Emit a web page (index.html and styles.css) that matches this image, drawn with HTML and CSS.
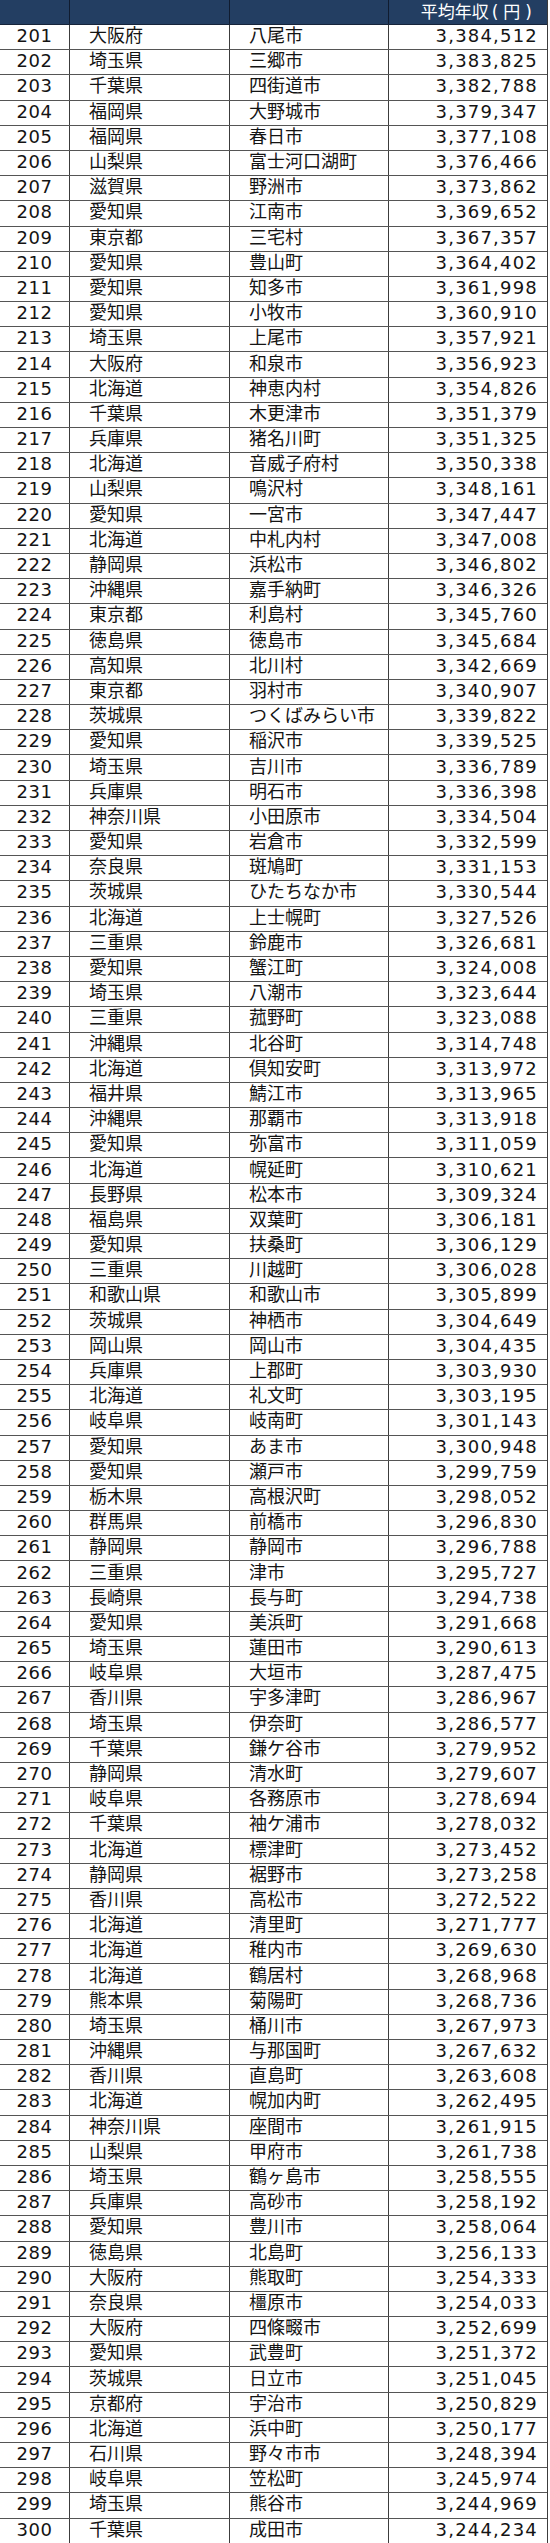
FILE: index.html
```html
<!DOCTYPE html>
<html lang="ja">
<head>
<meta charset="utf-8">
<title>平均年収ランキング 201-300</title>
<link rel="stylesheet" href="styles.css">
</head>
<body>
<div class="table">
<div class="row head"><div class="c rank"></div><div class="c pref"></div><div class="c city"></div><div class="c inc"><span class="htext">平均年収<span class="unit">(円)</span></span></div></div>
<div class="row"><div class="c rank">201</div><div class="c pref">大阪府</div><div class="c city">八尾市</div><div class="c inc">3,384,512</div></div>
<div class="row"><div class="c rank">202</div><div class="c pref">埼玉県</div><div class="c city">三郷市</div><div class="c inc">3,383,825</div></div>
<div class="row"><div class="c rank">203</div><div class="c pref">千葉県</div><div class="c city">四街道市</div><div class="c inc">3,382,788</div></div>
<div class="row"><div class="c rank">204</div><div class="c pref">福岡県</div><div class="c city">大野城市</div><div class="c inc">3,379,347</div></div>
<div class="row"><div class="c rank">205</div><div class="c pref">福岡県</div><div class="c city">春日市</div><div class="c inc">3,377,108</div></div>
<div class="row"><div class="c rank">206</div><div class="c pref">山梨県</div><div class="c city">富士河口湖町</div><div class="c inc">3,376,466</div></div>
<div class="row"><div class="c rank">207</div><div class="c pref">滋賀県</div><div class="c city">野洲市</div><div class="c inc">3,373,862</div></div>
<div class="row"><div class="c rank">208</div><div class="c pref">愛知県</div><div class="c city">江南市</div><div class="c inc">3,369,652</div></div>
<div class="row"><div class="c rank">209</div><div class="c pref">東京都</div><div class="c city">三宅村</div><div class="c inc">3,367,357</div></div>
<div class="row"><div class="c rank">210</div><div class="c pref">愛知県</div><div class="c city">豊山町</div><div class="c inc">3,364,402</div></div>
<div class="row"><div class="c rank">211</div><div class="c pref">愛知県</div><div class="c city">知多市</div><div class="c inc">3,361,998</div></div>
<div class="row"><div class="c rank">212</div><div class="c pref">愛知県</div><div class="c city">小牧市</div><div class="c inc">3,360,910</div></div>
<div class="row"><div class="c rank">213</div><div class="c pref">埼玉県</div><div class="c city">上尾市</div><div class="c inc">3,357,921</div></div>
<div class="row"><div class="c rank">214</div><div class="c pref">大阪府</div><div class="c city">和泉市</div><div class="c inc">3,356,923</div></div>
<div class="row"><div class="c rank">215</div><div class="c pref">北海道</div><div class="c city">神恵内村</div><div class="c inc">3,354,826</div></div>
<div class="row"><div class="c rank">216</div><div class="c pref">千葉県</div><div class="c city">木更津市</div><div class="c inc">3,351,379</div></div>
<div class="row"><div class="c rank">217</div><div class="c pref">兵庫県</div><div class="c city">猪名川町</div><div class="c inc">3,351,325</div></div>
<div class="row"><div class="c rank">218</div><div class="c pref">北海道</div><div class="c city">音威子府村</div><div class="c inc">3,350,338</div></div>
<div class="row"><div class="c rank">219</div><div class="c pref">山梨県</div><div class="c city">鳴沢村</div><div class="c inc">3,348,161</div></div>
<div class="row"><div class="c rank">220</div><div class="c pref">愛知県</div><div class="c city">一宮市</div><div class="c inc">3,347,447</div></div>
<div class="row"><div class="c rank">221</div><div class="c pref">北海道</div><div class="c city">中札内村</div><div class="c inc">3,347,008</div></div>
<div class="row"><div class="c rank">222</div><div class="c pref">静岡県</div><div class="c city">浜松市</div><div class="c inc">3,346,802</div></div>
<div class="row"><div class="c rank">223</div><div class="c pref">沖縄県</div><div class="c city">嘉手納町</div><div class="c inc">3,346,326</div></div>
<div class="row"><div class="c rank">224</div><div class="c pref">東京都</div><div class="c city">利島村</div><div class="c inc">3,345,760</div></div>
<div class="row"><div class="c rank">225</div><div class="c pref">徳島県</div><div class="c city">徳島市</div><div class="c inc">3,345,684</div></div>
<div class="row"><div class="c rank">226</div><div class="c pref">高知県</div><div class="c city">北川村</div><div class="c inc">3,342,669</div></div>
<div class="row"><div class="c rank">227</div><div class="c pref">東京都</div><div class="c city">羽村市</div><div class="c inc">3,340,907</div></div>
<div class="row"><div class="c rank">228</div><div class="c pref">茨城県</div><div class="c city">つくばみらい市</div><div class="c inc">3,339,822</div></div>
<div class="row"><div class="c rank">229</div><div class="c pref">愛知県</div><div class="c city">稲沢市</div><div class="c inc">3,339,525</div></div>
<div class="row"><div class="c rank">230</div><div class="c pref">埼玉県</div><div class="c city">吉川市</div><div class="c inc">3,336,789</div></div>
<div class="row"><div class="c rank">231</div><div class="c pref">兵庫県</div><div class="c city">明石市</div><div class="c inc">3,336,398</div></div>
<div class="row"><div class="c rank">232</div><div class="c pref">神奈川県</div><div class="c city">小田原市</div><div class="c inc">3,334,504</div></div>
<div class="row"><div class="c rank">233</div><div class="c pref">愛知県</div><div class="c city">岩倉市</div><div class="c inc">3,332,599</div></div>
<div class="row"><div class="c rank">234</div><div class="c pref">奈良県</div><div class="c city">斑鳩町</div><div class="c inc">3,331,153</div></div>
<div class="row"><div class="c rank">235</div><div class="c pref">茨城県</div><div class="c city">ひたちなか市</div><div class="c inc">3,330,544</div></div>
<div class="row"><div class="c rank">236</div><div class="c pref">北海道</div><div class="c city">上士幌町</div><div class="c inc">3,327,526</div></div>
<div class="row"><div class="c rank">237</div><div class="c pref">三重県</div><div class="c city">鈴鹿市</div><div class="c inc">3,326,681</div></div>
<div class="row"><div class="c rank">238</div><div class="c pref">愛知県</div><div class="c city">蟹江町</div><div class="c inc">3,324,008</div></div>
<div class="row"><div class="c rank">239</div><div class="c pref">埼玉県</div><div class="c city">八潮市</div><div class="c inc">3,323,644</div></div>
<div class="row"><div class="c rank">240</div><div class="c pref">三重県</div><div class="c city">菰野町</div><div class="c inc">3,323,088</div></div>
<div class="row"><div class="c rank">241</div><div class="c pref">沖縄県</div><div class="c city">北谷町</div><div class="c inc">3,314,748</div></div>
<div class="row"><div class="c rank">242</div><div class="c pref">北海道</div><div class="c city">倶知安町</div><div class="c inc">3,313,972</div></div>
<div class="row"><div class="c rank">243</div><div class="c pref">福井県</div><div class="c city">鯖江市</div><div class="c inc">3,313,965</div></div>
<div class="row"><div class="c rank">244</div><div class="c pref">沖縄県</div><div class="c city">那覇市</div><div class="c inc">3,313,918</div></div>
<div class="row"><div class="c rank">245</div><div class="c pref">愛知県</div><div class="c city">弥富市</div><div class="c inc">3,311,059</div></div>
<div class="row"><div class="c rank">246</div><div class="c pref">北海道</div><div class="c city">幌延町</div><div class="c inc">3,310,621</div></div>
<div class="row"><div class="c rank">247</div><div class="c pref">長野県</div><div class="c city">松本市</div><div class="c inc">3,309,324</div></div>
<div class="row"><div class="c rank">248</div><div class="c pref">福島県</div><div class="c city">双葉町</div><div class="c inc">3,306,181</div></div>
<div class="row"><div class="c rank">249</div><div class="c pref">愛知県</div><div class="c city">扶桑町</div><div class="c inc">3,306,129</div></div>
<div class="row"><div class="c rank">250</div><div class="c pref">三重県</div><div class="c city">川越町</div><div class="c inc">3,306,028</div></div>
<div class="row"><div class="c rank">251</div><div class="c pref">和歌山県</div><div class="c city">和歌山市</div><div class="c inc">3,305,899</div></div>
<div class="row"><div class="c rank">252</div><div class="c pref">茨城県</div><div class="c city">神栖市</div><div class="c inc">3,304,649</div></div>
<div class="row"><div class="c rank">253</div><div class="c pref">岡山県</div><div class="c city">岡山市</div><div class="c inc">3,304,435</div></div>
<div class="row"><div class="c rank">254</div><div class="c pref">兵庫県</div><div class="c city">上郡町</div><div class="c inc">3,303,930</div></div>
<div class="row"><div class="c rank">255</div><div class="c pref">北海道</div><div class="c city">礼文町</div><div class="c inc">3,303,195</div></div>
<div class="row"><div class="c rank">256</div><div class="c pref">岐阜県</div><div class="c city">岐南町</div><div class="c inc">3,301,143</div></div>
<div class="row"><div class="c rank">257</div><div class="c pref">愛知県</div><div class="c city">あま市</div><div class="c inc">3,300,948</div></div>
<div class="row"><div class="c rank">258</div><div class="c pref">愛知県</div><div class="c city">瀬戸市</div><div class="c inc">3,299,759</div></div>
<div class="row"><div class="c rank">259</div><div class="c pref">栃木県</div><div class="c city">高根沢町</div><div class="c inc">3,298,052</div></div>
<div class="row"><div class="c rank">260</div><div class="c pref">群馬県</div><div class="c city">前橋市</div><div class="c inc">3,296,830</div></div>
<div class="row"><div class="c rank">261</div><div class="c pref">静岡県</div><div class="c city">静岡市</div><div class="c inc">3,296,788</div></div>
<div class="row"><div class="c rank">262</div><div class="c pref">三重県</div><div class="c city">津市</div><div class="c inc">3,295,727</div></div>
<div class="row"><div class="c rank">263</div><div class="c pref">長崎県</div><div class="c city">長与町</div><div class="c inc">3,294,738</div></div>
<div class="row"><div class="c rank">264</div><div class="c pref">愛知県</div><div class="c city">美浜町</div><div class="c inc">3,291,668</div></div>
<div class="row"><div class="c rank">265</div><div class="c pref">埼玉県</div><div class="c city">蓮田市</div><div class="c inc">3,290,613</div></div>
<div class="row"><div class="c rank">266</div><div class="c pref">岐阜県</div><div class="c city">大垣市</div><div class="c inc">3,287,475</div></div>
<div class="row"><div class="c rank">267</div><div class="c pref">香川県</div><div class="c city">宇多津町</div><div class="c inc">3,286,967</div></div>
<div class="row"><div class="c rank">268</div><div class="c pref">埼玉県</div><div class="c city">伊奈町</div><div class="c inc">3,286,577</div></div>
<div class="row"><div class="c rank">269</div><div class="c pref">千葉県</div><div class="c city">鎌ケ谷市</div><div class="c inc">3,279,952</div></div>
<div class="row"><div class="c rank">270</div><div class="c pref">静岡県</div><div class="c city">清水町</div><div class="c inc">3,279,607</div></div>
<div class="row"><div class="c rank">271</div><div class="c pref">岐阜県</div><div class="c city">各務原市</div><div class="c inc">3,278,694</div></div>
<div class="row"><div class="c rank">272</div><div class="c pref">千葉県</div><div class="c city">袖ケ浦市</div><div class="c inc">3,278,032</div></div>
<div class="row"><div class="c rank">273</div><div class="c pref">北海道</div><div class="c city">標津町</div><div class="c inc">3,273,452</div></div>
<div class="row"><div class="c rank">274</div><div class="c pref">静岡県</div><div class="c city">裾野市</div><div class="c inc">3,273,258</div></div>
<div class="row"><div class="c rank">275</div><div class="c pref">香川県</div><div class="c city">高松市</div><div class="c inc">3,272,522</div></div>
<div class="row"><div class="c rank">276</div><div class="c pref">北海道</div><div class="c city">清里町</div><div class="c inc">3,271,777</div></div>
<div class="row"><div class="c rank">277</div><div class="c pref">北海道</div><div class="c city">稚内市</div><div class="c inc">3,269,630</div></div>
<div class="row"><div class="c rank">278</div><div class="c pref">北海道</div><div class="c city">鶴居村</div><div class="c inc">3,268,968</div></div>
<div class="row"><div class="c rank">279</div><div class="c pref">熊本県</div><div class="c city">菊陽町</div><div class="c inc">3,268,736</div></div>
<div class="row"><div class="c rank">280</div><div class="c pref">埼玉県</div><div class="c city">桶川市</div><div class="c inc">3,267,973</div></div>
<div class="row"><div class="c rank">281</div><div class="c pref">沖縄県</div><div class="c city">与那国町</div><div class="c inc">3,267,632</div></div>
<div class="row"><div class="c rank">282</div><div class="c pref">香川県</div><div class="c city">直島町</div><div class="c inc">3,263,608</div></div>
<div class="row"><div class="c rank">283</div><div class="c pref">北海道</div><div class="c city">幌加内町</div><div class="c inc">3,262,495</div></div>
<div class="row"><div class="c rank">284</div><div class="c pref">神奈川県</div><div class="c city">座間市</div><div class="c inc">3,261,915</div></div>
<div class="row"><div class="c rank">285</div><div class="c pref">山梨県</div><div class="c city">甲府市</div><div class="c inc">3,261,738</div></div>
<div class="row"><div class="c rank">286</div><div class="c pref">埼玉県</div><div class="c city">鶴ヶ島市</div><div class="c inc">3,258,555</div></div>
<div class="row"><div class="c rank">287</div><div class="c pref">兵庫県</div><div class="c city">高砂市</div><div class="c inc">3,258,192</div></div>
<div class="row"><div class="c rank">288</div><div class="c pref">愛知県</div><div class="c city">豊川市</div><div class="c inc">3,258,064</div></div>
<div class="row"><div class="c rank">289</div><div class="c pref">徳島県</div><div class="c city">北島町</div><div class="c inc">3,256,133</div></div>
<div class="row"><div class="c rank">290</div><div class="c pref">大阪府</div><div class="c city">熊取町</div><div class="c inc">3,254,333</div></div>
<div class="row"><div class="c rank">291</div><div class="c pref">奈良県</div><div class="c city">橿原市</div><div class="c inc">3,254,033</div></div>
<div class="row"><div class="c rank">292</div><div class="c pref">大阪府</div><div class="c city">四條畷市</div><div class="c inc">3,252,699</div></div>
<div class="row"><div class="c rank">293</div><div class="c pref">愛知県</div><div class="c city">武豊町</div><div class="c inc">3,251,372</div></div>
<div class="row"><div class="c rank">294</div><div class="c pref">茨城県</div><div class="c city">日立市</div><div class="c inc">3,251,045</div></div>
<div class="row"><div class="c rank">295</div><div class="c pref">京都府</div><div class="c city">宇治市</div><div class="c inc">3,250,829</div></div>
<div class="row"><div class="c rank">296</div><div class="c pref">北海道</div><div class="c city">浜中町</div><div class="c inc">3,250,177</div></div>
<div class="row"><div class="c rank">297</div><div class="c pref">石川県</div><div class="c city">野々市市</div><div class="c inc">3,248,394</div></div>
<div class="row"><div class="c rank">298</div><div class="c pref">岐阜県</div><div class="c city">笠松町</div><div class="c inc">3,245,974</div></div>
<div class="row"><div class="c rank">299</div><div class="c pref">埼玉県</div><div class="c city">熊谷市</div><div class="c inc">3,244,969</div></div>
<div class="row"><div class="c rank">300</div><div class="c pref">千葉県</div><div class="c city">成田市</div><div class="c inc">3,244,234</div></div>
</div>
</body>
</html>
```

FILE: styles.css
```css
html, body {
  margin: 0;
  padding: 0;
  background: #ffffff;
}

body {
  font-family: "DejaVu Sans", "Noto Sans CJK JP", sans-serif;
  color: #141414;
  font-size: 18px;
}

.table {
  width: 548px;
  height: 2543px;
  display: flex;
  flex-direction: column;
  box-sizing: border-box;
  border-right: 1px solid #3c3c3c;
}

.row {
  flex: 1 1 0;
  min-height: 0;
  display: grid;
  grid-template-columns: 70px 160px 159px 1fr;
  border-bottom: 1px solid #555555;
  box-sizing: border-box;
}

.row:last-child {
  border-bottom: none;
}

.head {
  flex: 0 0 25px;
  background: #233e62;
  border-bottom: 1px solid #16243a;
}

.c {
  display: flex;
  align-items: center;
  border-right: 1px solid #3c3c3c;
  white-space: nowrap;
  line-height: 1;
  padding-bottom: 2px;
  box-sizing: border-box;
  min-width: 0;
}

.c:last-child {
  border-right: none;
}

.head .c {
  border-right-color: #101c30;
}

.rank {
  justify-content: center;
  letter-spacing: 0.5px;
}

.pref {
  padding-left: 19px;
}

.city {
  padding-left: 19px;
}

.inc {
  justify-content: flex-end;
  padding-right: 9px;
  letter-spacing: 1.2px;
}

.head .inc {
  color: #ffffff;
  font-family: "Noto Sans CJK JP", sans-serif;
  font-size: 17px;
  letter-spacing: 0;
  padding-right: 10px;
  padding-bottom: 1px;
}

.htext {
  line-height: 20px;
}

.unit {
  font-family: "DejaVu Sans", "Noto Sans CJK JP", sans-serif;
  letter-spacing: 5px;
  margin-left: 3px;
}
```
